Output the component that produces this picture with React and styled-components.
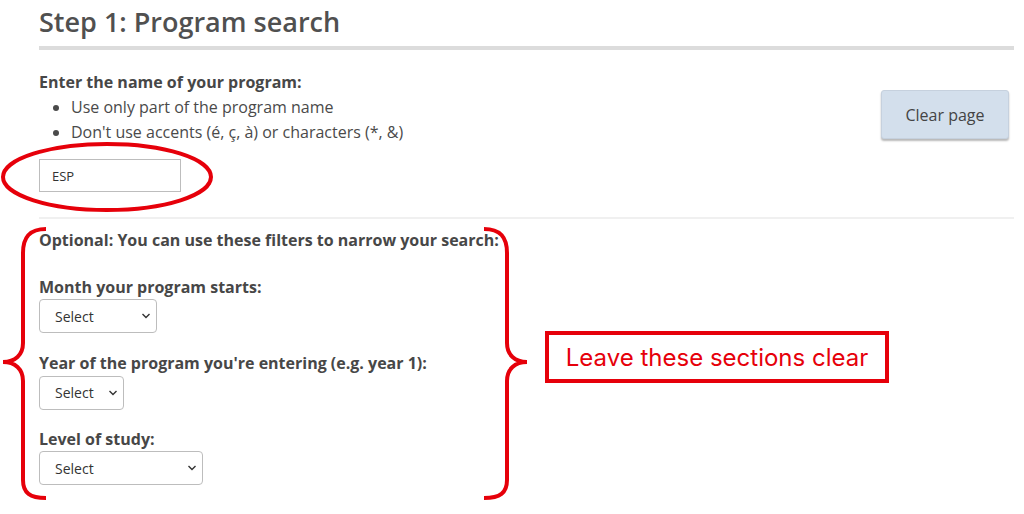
import React from 'react';
import styled, { createGlobalStyle } from 'styled-components';

const GlobalStyle = createGlobalStyle`
  html, body { margin: 0; padding: 0; background: #fff; }
  body { font-family: "Open Sans", "Liberation Sans", sans-serif; color: #4a4a4a; }
`;

const Page = styled.div`
  position: relative;
  width: 1024px;
  height: 514px;
  box-sizing: border-box;
  padding: 0 10px 0 39px;
  overflow: hidden;
`;

const Title = styled.h1`
  margin: 0;
  padding: 5px 0 7px;
  font-size: 27px;
  line-height: 34px;
  font-weight: 600;
  color: #505050;
  border-bottom: 4px solid #dcdcdc;
`;

const SearchRow = styled.div`
  display: flex;
  justify-content: space-between;
  align-items: flex-start;
  padding-top: 20px;
  padding-bottom: 25px;
  border-bottom: 2px solid #f0f0f0;
`;

const Label = styled.div`
  font-size: 16px;
  font-weight: 700;
  line-height: ${p => p.$lh || '25px'};
  color: #474747;
`;

const Hints = styled.ul`
  margin: 0 0 14px;
  padding-left: 32px;
  font-size: 16px;
  line-height: 25px;
  color: #4a4a4a;
`;

const NameInput = styled.input`
  display: block;
  box-sizing: border-box;
  width: 142px;
  height: 33px;
  padding: 0 12px;
  border: 1px solid #bdbdbd;
  font-family: inherit;
  font-size: 13px;
  color: #333;
  outline: none;
`;

const ClearButton = styled.button`
  margin: 20px 5px 0 0;
  width: 128px;
  height: 49px;
  border: 1px solid #c6d1de;
  border-radius: 3px;
  background: #d3dfec;
  box-shadow: 0 2px 2px rgba(0, 0, 0, 0.28);
  font-family: inherit;
  font-size: 16px;
  color: #444;
`;

const Filters = styled.div`
  padding-top: 10px;
`;

const FieldGroup = styled.div`
  margin-top: ${p => p.$top}px;
`;

const SelectWrap = styled.div`
  position: relative;
  width: ${p => p.$w}px;
  height: 34px;
  margin-top: 1px;
`;

const Select = styled.select`
  appearance: none;
  -webkit-appearance: none;
  box-sizing: border-box;
  width: 100%;
  height: 100%;
  padding: 0 20px 0 15px;
  border: 1px solid #bdbdbd;
  border-radius: 4px;
  background: #fff;
  font-family: inherit;
  font-size: 14px;
  color: #333;
`;

const Chevron = styled.svg`
  position: absolute;
  right: 6px;
  top: 13px;
  pointer-events: none;
`;

const Ellipse = styled.svg`
  position: absolute;
  left: 0;
  top: 140px;
`;

const Brace = styled.svg`
  position: absolute;
  top: 225px;
  left: ${p => p.$left}px;
  transform: ${p => (p.$flip ? 'scaleX(-1)' : 'none')};
`;

const Note = styled.div`
  position: absolute;
  left: 545px;
  top: 331px;
  width: 344px;
  height: 52px;
  box-sizing: border-box;
  border: 4px solid #e6000a;
  display: flex;
  align-items: center;
  justify-content: center;
  font-family: Inter, "Liberation Sans", sans-serif;
  font-size: 24px;
  color: #e6000a;
`;

const DropDown = ({ width }) => (
  <SelectWrap $w={width}>
    <Select defaultValue="">
      <option value="">Select</option>
    </Select>
    <Chevron width="10" height="8" viewBox="0 0 10 8">
      <path d="M1.5 2 L5 5.5 L8.5 2" fill="none" stroke="#333" strokeWidth="1.4" />
    </Chevron>
  </SelectWrap>
);

const BracePath = () => (
  <path
    d="M46 4 C30 4 23 12 23 28 L23 118 C23 130 15 137 3 137 C15 137 23 144 23 156 L23 255 C23 268 30 273 46 273"
    fill="none"
    stroke="#e6000a"
    strokeWidth="4"
  />
);

export default function App() {
  return (
    <>
      <GlobalStyle />
      <Page>
        <Title>Step 1: Program search</Title>
        <SearchRow>
          <div>
            <Label>Enter the name of your program:</Label>
            <Hints>
              <li>Use only part of the program name</li>
              <li>Don't use accents (é, ç, à) or characters (*, &amp;)</li>
            </Hints>
            <NameInput defaultValue="ESP" />
          </div>
          <ClearButton>Clear page</ClearButton>
        </SearchRow>
        <Filters>
          <Label $lh="22.5px">Optional: You can use these filters to narrow your search:</Label>
          <FieldGroup $top={24}>
            <Label $lh="22.5px">Month your program starts:</Label>
            <DropDown width={118} />
          </FieldGroup>
          <FieldGroup $top={19}>
            <Label $lh="22.5px">Year of the program you're entering (e.g. year 1):</Label>
            <DropDown width={85} />
          </FieldGroup>
          <FieldGroup $top={18}>
            <Label $lh="22.5px">Level of study:</Label>
            <DropDown width={164} />
          </FieldGroup>
        </Filters>

        <Ellipse width="218" height="74" viewBox="0 0 218 74">
          <ellipse cx="107" cy="37" rx="104" ry="33" fill="none" stroke="#e6000a" strokeWidth="4" />
        </Ellipse>
        <Brace $left={0} width="50" height="280" viewBox="0 0 50 280">
          <BracePath />
        </Brace>
        <Brace $left={480} $flip width="50" height="280" viewBox="0 0 50 280">
          <BracePath />
        </Brace>
        <Note>Leave these sections clear</Note>
      </Page>
    </>
  );
}
